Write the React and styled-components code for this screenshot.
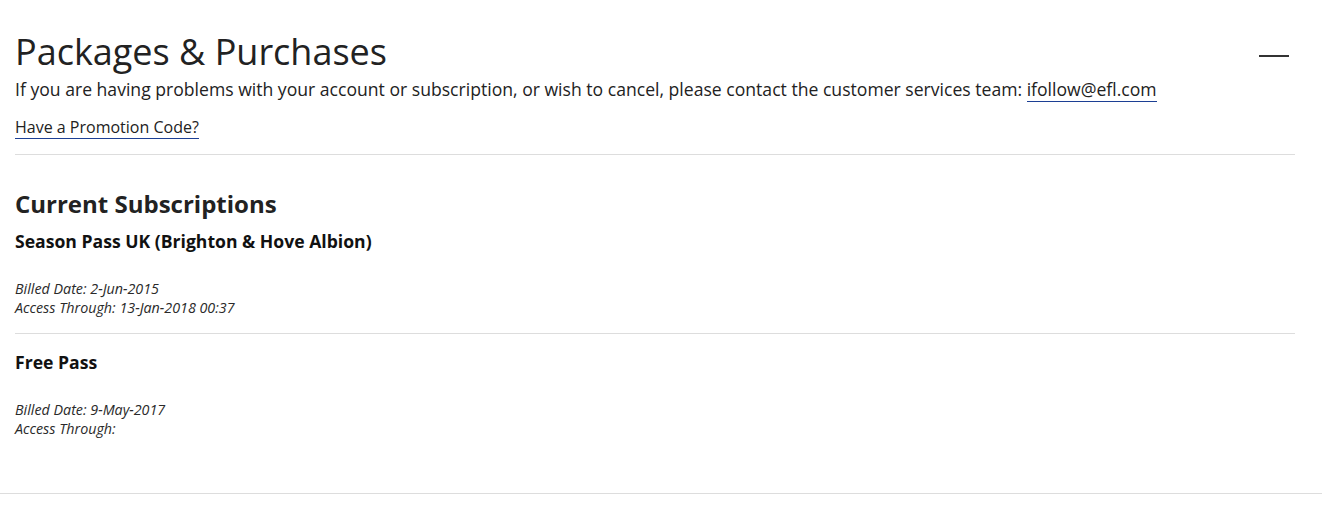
import React from 'react';
import styled, { createGlobalStyle } from 'styled-components';

const GlobalStyle = createGlobalStyle`
  html, body {
    margin: 0;
    padding: 0;
    background: #fff;
  }
  body {
    font-family: "Open Sans", "Liberation Sans", sans-serif;
    color: #222;
  }
`;

const Section = styled.section`
  padding: 30px 27px 0 15px;
  border-bottom: 1px solid #ddd;
`;

const Header = styled.div`
  display: flex;
  justify-content: space-between;
  align-items: flex-start;
`;

const Title = styled.h1`
  margin: 0;
  font-size: 36px;
  line-height: 43px;
  font-weight: 400;
  color: #222;
`;

const Collapse = styled.button`
  width: 30px;
  height: 20px;
  margin: 16px 6px 0 0;
  padding: 0;
  border: none;
  background: transparent;
  display: flex;
  align-items: center;
  cursor: pointer;

  &::before {
    content: '';
    display: block;
    width: 30px;
    height: 2px;
    background: #333;
  }
`;

const Intro = styled.p`
  margin: 4px 0 0;
  font-size: 17.6px;
  line-height: 24px;
`;

const Link = styled.a`
  color: #222;
  text-decoration: none;
  border-bottom: 1px solid #1c3f94;
`;

const Promo = styled.div`
  margin-top: 15px;
  padding-bottom: 16px;
  font-size: 16px;
  line-height: 22px;
  border-bottom: 1px solid #ddd;
`;

const SubTitle = styled.h2`
  margin: 33px 0 0;
  font-size: 24px;
  line-height: 32px;
  font-weight: 700;
  color: #222;
`;

const Item = styled.div`
  padding: ${props => (props.first ? '9px' : '16px')} 0 ${props => (props.last ? '55px' : '16px')};
  border-bottom: ${props => (props.last ? 'none' : '1px solid #ddd')};
`;

const ItemName = styled.h3`
  margin: 0;
  font-size: 17.6px;
  line-height: 24px;
  font-weight: 700;
  color: #111;
`;

const Meta = styled.div`
  margin-top: 26px;
  font-size: 14.3px;
  line-height: 19px;
  font-style: italic;
  color: #2a2a2a;
`;

const subscriptions = [
  { name: 'Season Pass UK (Brighton & Hove Albion)', billed: '2-Jun-2015', access: '13-Jan-2018 00:37' },
  { name: 'Free Pass', billed: '9-May-2017', access: '' }
];

export default function App() {
  return (
    <>
      <GlobalStyle />
      <Section>
        <Header>
          <Title>Packages &amp; Purchases</Title>
          <Collapse aria-label="Collapse" />
        </Header>
        <Intro>
          If you are having problems with your account or subscription, or wish to cancel, please contact the customer services team:{' '}
          <Link href="#">ifollow@efl.com</Link>
        </Intro>
        <Promo>
          <Link href="#">Have a Promotion Code?</Link>
        </Promo>
        <SubTitle>Current Subscriptions</SubTitle>
        {subscriptions.map((sub, i) => (
          <Item key={sub.name} first={i === 0} last={i === subscriptions.length - 1}>
            <ItemName>{sub.name}</ItemName>
            <Meta>
              Billed Date: {sub.billed}
              <br />
              Access Through: {sub.access}
            </Meta>
          </Item>
        ))}
      </Section>
    </>
  );
}
